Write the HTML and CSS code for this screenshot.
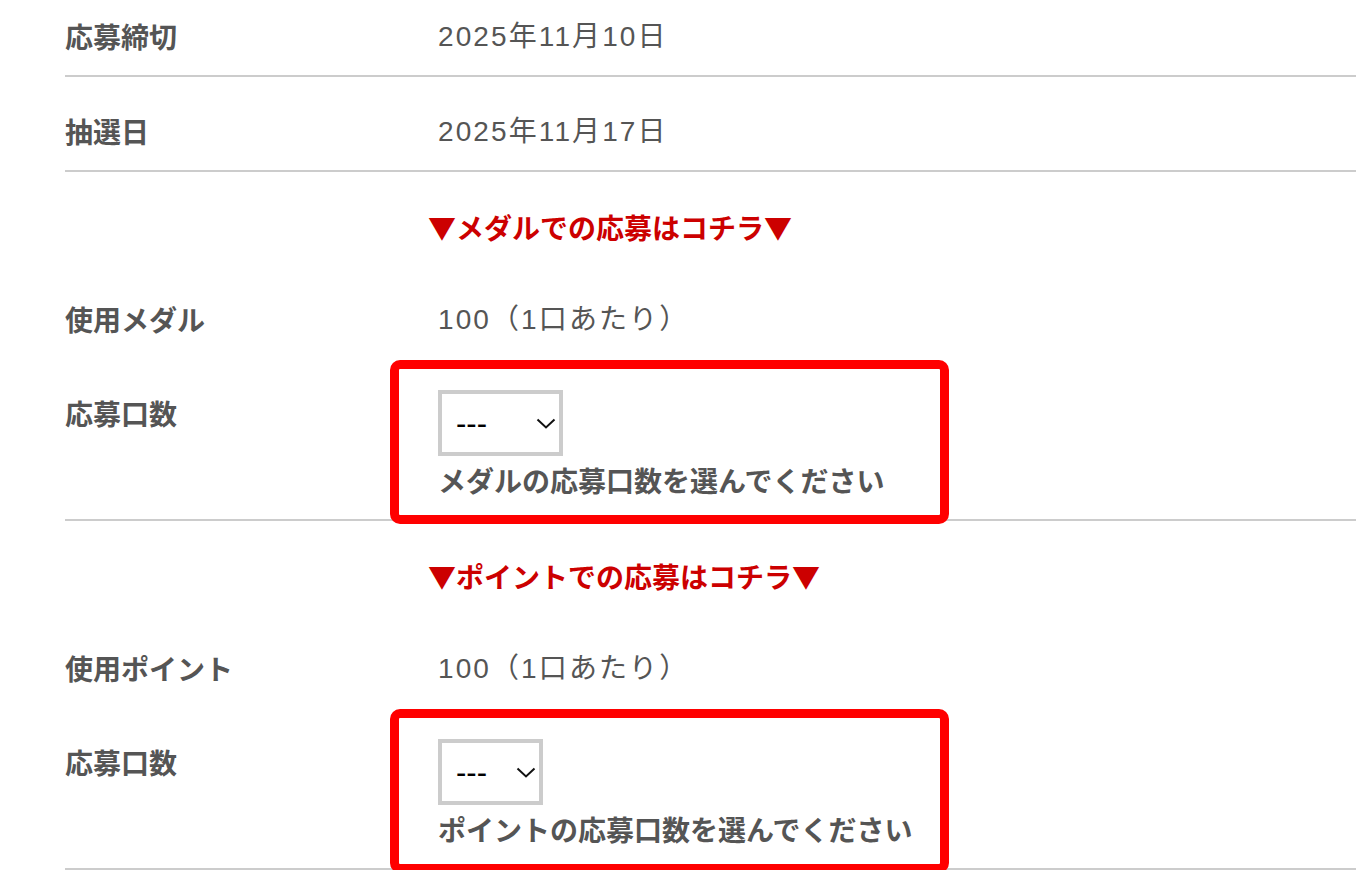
FILE: index.html
```html
<!DOCTYPE html>
<html lang="ja">
<head>
<meta charset="utf-8">
<title>応募</title>
<link rel="stylesheet" href="styles.css">
</head>
<body>
<div class="list">
  <div class="row first">
    <div class="label">応募締切</div>
    <div class="value">2025年11月10日</div>
  </div>
  <div class="row">
    <div class="label">抽選日</div>
    <div class="value">2025年11月17日</div>
  </div>

  <div class="section">
    <p class="notice">▼メダルでの応募はコチラ▼</p>
    <div class="line">
      <div class="label">使用メダル</div>
      <div class="value">100（1口あたり）</div>
    </div>
    <div class="line entry">
      <div class="label">応募口数</div>
      <div class="field">
        <div class="select-wrap medal">
          <select class="select"><option>---</option></select>
          <svg class="chev" width="20" height="11" viewBox="0 0 20 11"><path d="M1.5 1.5 L10 9.5 L18.5 1.5" fill="none" stroke="#111" stroke-width="2"/></svg>
        </div>
        <p class="help">メダルの応募口数を選んでください</p>
        <div class="highlight"></div>
      </div>
    </div>
  </div>

  <div class="section">
    <p class="notice">▼ポイントでの応募はコチラ▼</p>
    <div class="line">
      <div class="label">使用ポイント</div>
      <div class="value">100（1口あたり）</div>
    </div>
    <div class="line entry">
      <div class="label">応募口数</div>
      <div class="field">
        <div class="select-wrap point">
          <select class="select"><option>---</option></select>
          <svg class="chev" width="20" height="11" viewBox="0 0 20 11"><path d="M1.5 1.5 L10 9.5 L18.5 1.5" fill="none" stroke="#111" stroke-width="2"/></svg>
        </div>
        <p class="help">ポイントの応募口数を選んでください</p>
        <div class="highlight"></div>
      </div>
    </div>
  </div>
</div>
</body>
</html>
```

FILE: styles.css
```css
html, body {
  margin: 0;
  padding: 0;
  background: #fff;
}

body {
  font-family: "Noto Sans CJK JP", "Noto Sans", sans-serif;
  color: #555;
  font-size: 28px;
  line-height: 42px;
  overflow: hidden;
}

.list {
  padding-left: 65px;
}

.row {
  display: flex;
  align-items: flex-start;
  padding: 33px 0 18px;
  border-bottom: 2px solid #ccc;
}

.row.first {
  padding-top: 15px;
}

.label {
  width: 373px;
  flex: none;
  font-weight: 700;
  color: #555;
}

.value {
  font-family: "Liberation Sans", "Noto Sans CJK JP", sans-serif;
  font-weight: 400;
  color: #555;
  letter-spacing: 0.075em;
  padding-top: 2px;
  line-height: 40px;
}

.section {
  padding: 34px 0 18px;
  border-bottom: 2px solid #ccc;
}

.notice {
  margin: 0;
  padding-left: 363px;
  color: #cc0000;
  font-weight: 700;
}

.line {
  display: flex;
  align-items: flex-start;
  margin-top: 50px;
}

.entry .label {
  margin-top: 2px;
}

.field {
  position: relative;
}

.select-wrap {
  position: relative;
  height: 66px;
}

.select-wrap.medal { width: 125px; }
.select-wrap.point { width: 105px; }

.select {
  -webkit-appearance: none;
  appearance: none;
  width: 100%;
  height: 100%;
  box-sizing: border-box;
  border: 4px solid #ccc;
  border-radius: 0;
  background: #fff;
  margin: 0;
  padding: 0 0 0 14px;
  font-family: "Liberation Sans", sans-serif;
  font-size: 31px;
  font-weight: 400;
  color: #000;
}

.chev {
  position: absolute;
  right: 7px;
  top: 28px;
}

.help {
  margin: 3px 0 0;
  font-weight: 700;
  color: #555;
}

.highlight {
  position: absolute;
  left: -48px;
  top: -30px;
  width: 559px;
  height: 164px;
  box-sizing: border-box;
  border: 9px solid #ff0000;
  border-radius: 10px;
  pointer-events: none;
}
```
